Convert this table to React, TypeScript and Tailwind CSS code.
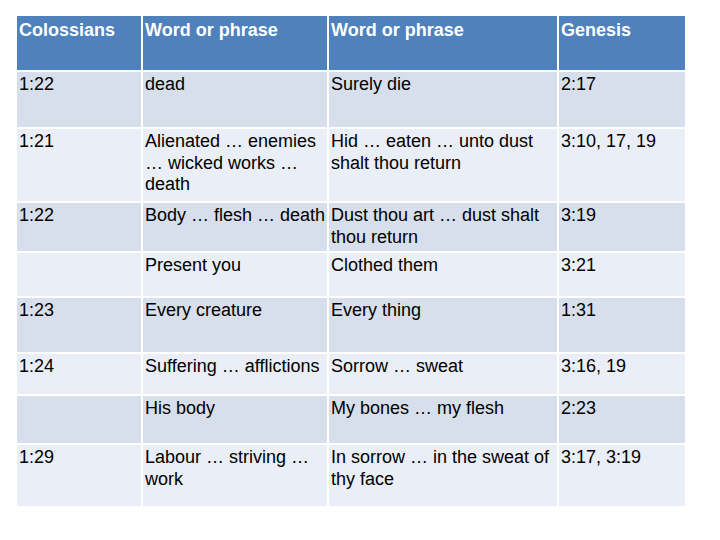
const rows: string[][] = [
  ["1:22", "dead", "Surely die", "2:17"],
  ["1:21", "Alienated … enemies … wicked works … death", "Hid … eaten … unto dust shalt thou return", "3:10, 17, 19"],
  ["1:22", "Body … flesh … death", "Dust thou art … dust shalt thou return", "3:19"],
  ["", "Present you", "Clothed them", "3:21"],
  ["1:23", "Every creature", "Every thing", "1:31"],
  ["1:24", "Suffering … afflictions", "Sorrow … sweat", "3:16, 19"],
  ["", "His body", "My bones … my flesh", "2:23"],
  ["1:29", "Labour … striving … work", "In sorrow … in the sweat of thy face", "3:17, 3:19"],
];

const headers = ["Colossians", "Word or phrase", "Word or phrase", "Genesis"];

export default function App() {
  return (
    <div className="w-[720px] h-[540px] bg-white pt-[16px] pl-[17px] font-['Liberation_Sans',Arial,sans-serif] text-[18px] leading-[21.5px]">
      <div className="grid grid-cols-[124px_184px_228px_126px] grid-rows-[54px_55px_72px_48px_43px_54px_40px_47px_61px] gap-[2px] w-fit">
        {headers.map((h, i) => (
          <div key={"h" + i} className="bg-[#4f81bd] text-white font-bold pl-[2px] pt-[4px]">
            {h}
          </div>
        ))}
        {rows.map((row, r) =>
          row.map((cell, c) => (
            <div
              key={r + "-" + c}
              className={`${r % 2 === 0 ? "bg-[#d6dfeb]" : "bg-[#eaeef6]"} text-black pl-[2px] pt-[2px]`}
            >
              {cell}
            </div>
          ))
        )}
      </div>
    </div>
  );
}
